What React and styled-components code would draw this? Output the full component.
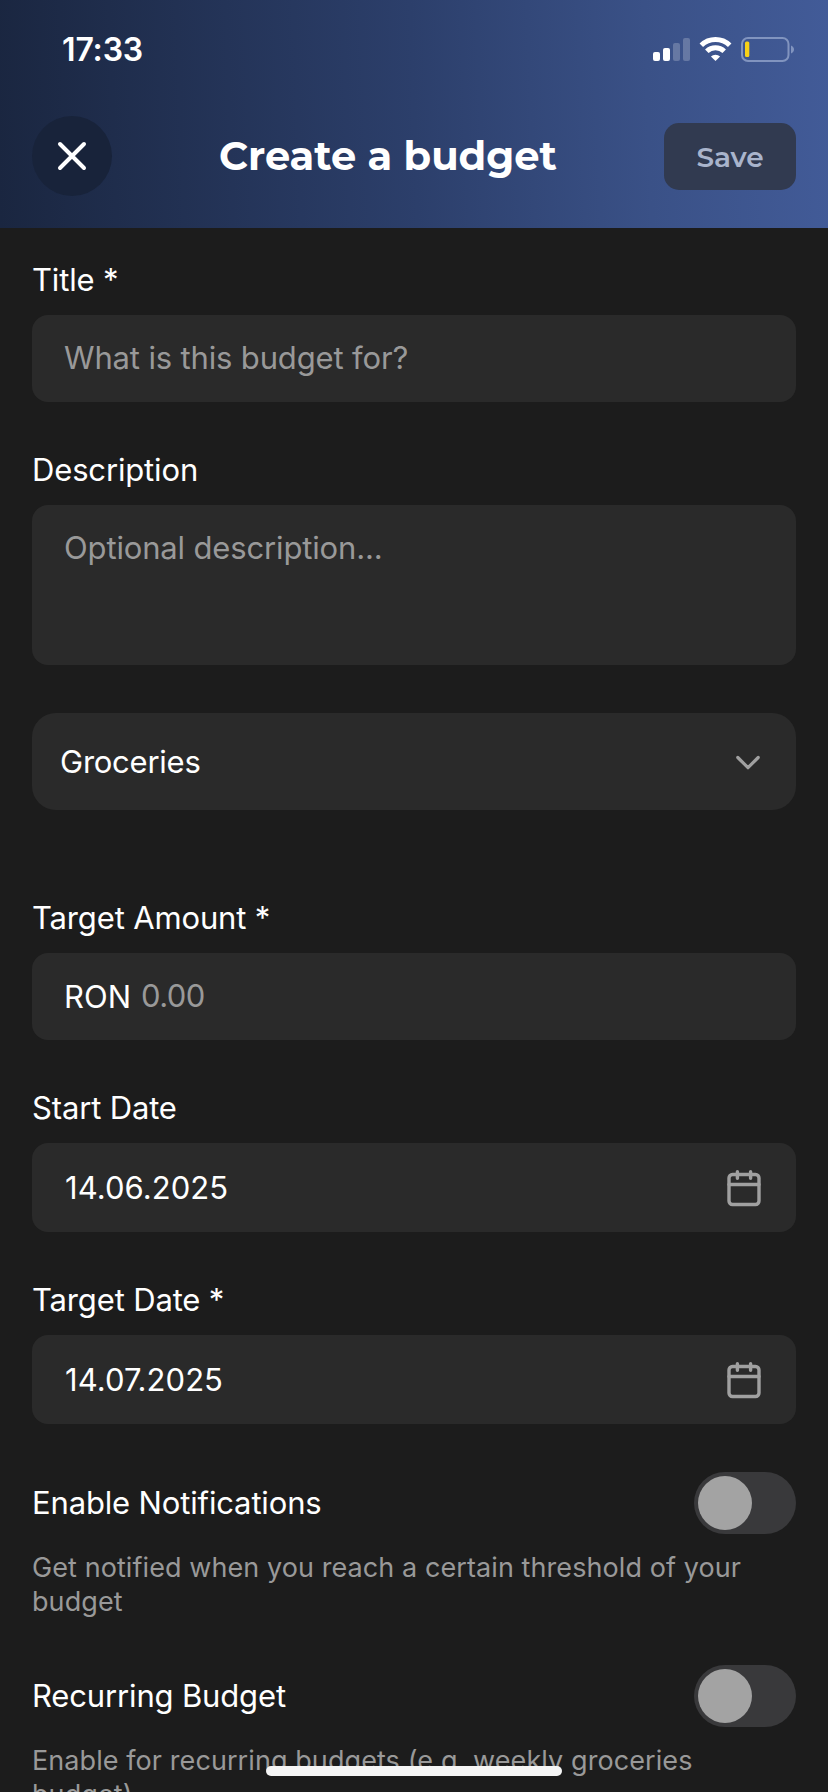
import React from "react";
import styled, { createGlobalStyle } from "styled-components";

const GlobalStyle = createGlobalStyle`
  *, *::before, *::after { box-sizing: border-box; }
  html, body { margin: 0; padding: 0; background: #1c1c1c; }
  body { overflow: hidden; }
  button, input, textarea { font: inherit; letter-spacing: inherit; border: 0; margin: 0; }
`;

const Screen = styled.main`
  position: relative;
  width: 828px;
  height: 1792px;
  overflow: hidden;
  background: #1c1c1c;
  color: #fff;
  font-family: "Inter", "Liberation Sans", sans-serif;
  font-size: 31px;
  letter-spacing: -0.15px;
`;

const Header = styled.header`
  height: 228px;
  background: linear-gradient(88deg, #1a2640 0%, #2c3f6b 50%, #3a5187 78%, #425b98 100%);
`;

const StatusBar = styled.div`
  display: flex;
  align-items: center;
  justify-content: space-between;
  height: 98px;
  padding: 0 34px 0 62px;
`;

const Clock = styled.time`
  font-size: 32px;
  font-weight: 600;
  line-height: 36px;
  padding-top: 2px;
`;

const StatusIcons = styled.svg`
  display: block;
  width: 142px;
  height: 28px;
`;

const NavBar = styled.div`
  display: flex;
  align-items: center;
  justify-content: space-between;
  height: 116px;
  padding: 0 32px;
`;

const CloseButton = styled.button`
  display: grid;
  place-items: center;
  width: 80px;
  height: 80px;
  padding: 0;
  border-radius: 50%;
  background: #18233a;
  color: #fff;
`;

const Heading = styled.h1`
  margin: 0;
  font-family: "Montserrat", "Inter", sans-serif;
  font-size: 40px;
  font-weight: 700;
  line-height: 48px;
  letter-spacing: 0;
`;

const SaveButton = styled.button`
  width: 132px;
  height: 67px;
  margin-top: 1px;
  padding: 0;
  border-radius: 15px;
  background: #313a50;
  color: #a9b4cc;
  font-family: "Montserrat", "Inter", sans-serif;
  font-size: 28px;
  font-weight: 600;
`;

const Form = styled.form`
  display: flex;
  flex-direction: column;
  gap: 48px;
  padding: 32px 32px 0;
`;

const Field = styled.div`
  display: flex;
  flex-direction: column;
  gap: 16px;
  margin-top: ${({ $extraTop }) => $extraTop || 0}px;
`;

const Label = styled.label`
  line-height: 39px;
`;

const Control = styled.div`
  display: flex;
  align-items: center;
  justify-content: space-between;
  height: ${({ $height }) => $height || 87}px;
  padding: 0 32px;
  border-radius: 16px;
  background: #2a2a2a;
`;

const TextInput = styled.input`
  flex: 1;
  min-width: 0;
  padding: 0 0 2px;
  outline: 0;
  background: transparent;
  color: #fff;
  &::placeholder { color: #999; opacity: 1; }
`;

const TextArea = styled.textarea`
  display: block;
  width: 100%;
  height: 160px;
  padding: 24px 32px;
  resize: none;
  outline: 0;
  border-radius: 16px;
  background: #2a2a2a;
  color: #fff;
  line-height: 38px;
  &::placeholder { color: #999; opacity: 1; }
`;

const Currency = styled.span`
  margin-right: 10px;
  letter-spacing: 0;
`;

const AmountInput = styled(TextInput)`
  letter-spacing: -0.6px;
`;

const DateValue = styled.span`
  padding-left: 1px;
  letter-spacing: 0.05px;
`;

const Select = styled.div`
  display: flex;
  align-items: center;
  justify-content: space-between;
  height: 97px;
  padding: 0 34px 0 28px;
  border-radius: 24px;
  background: #2a2a2a;
  letter-spacing: -0.25px;
`;

const ToggleGroup = styled.section`
  display: flex;
  flex-direction: column;
  gap: 17px;
  margin-bottom: -2px;
`;

const ToggleRow = styled.div`
  display: flex;
  align-items: center;
  justify-content: space-between;
`;

const ToggleLabel = styled.span`
  padding-bottom: 2px;
`;

const Switch = styled.button`
  display: flex;
  align-items: center;
  width: 102px;
  height: 62px;
  padding: 0 4px;
  border-radius: 31px;
  background: #39393b;
`;

const Knob = styled.span`
  width: 54px;
  height: 54px;
  border-radius: 50%;
  background: #a3a3a3;
`;

const Hint = styled.p`
  margin: 0;
  color: #999;
  font-size: 27px;
  line-height: 34px;
  letter-spacing: 0.08px;
`;

const HomeIndicator = styled.div`
  position: absolute;
  left: 266px;
  bottom: 16px;
  width: 296px;
  height: 10px;
  border-radius: 5px;
  background: #f5f5f5;
`;

const CalendarIcon = () => (
  <svg width="40" height="40" viewBox="0 0 40 40" fill="none" stroke="#a0a0a0" strokeWidth="3.4" strokeLinecap="round" strokeLinejoin="round">
    <rect x="5" y="6.5" width="30" height="30" rx="3.5" />
    <path d="M5 16.5h30M13.4 3.7v6.6M26.6 3.7v6.6" />
  </svg>
);

const DateField = ({ label, value }) => (
  <Field>
    <Label>{label}</Label>
    <Control $height={89}>
      <DateValue>{value}</DateValue>
      <CalendarIcon />
    </Control>
  </Field>
);

const Toggle = ({ label, hint }) => (
  <ToggleGroup>
    <ToggleRow>
      <ToggleLabel>{label}</ToggleLabel>
      <Switch type="button" role="switch" aria-checked="false" aria-label={label}>
        <Knob />
      </Switch>
    </ToggleRow>
    <Hint>{hint}</Hint>
  </ToggleGroup>
);

export default function App() {
  return (
    <Screen>
      <GlobalStyle />
      <Header>
        <StatusBar>
          <Clock>17:33</Clock>
          <StatusIcons viewBox="652 35 142 28" fill="none">
            <g fill="#fff">
              <rect x="653" y="52" width="7" height="9" rx="2" />
              <rect x="663" y="48" width="7" height="13" rx="2" />
              <rect x="673" y="43" width="7" height="18" rx="2" opacity=".22" />
              <rect x="683" y="38" width="7" height="23" rx="2" opacity=".22" />
            </g>
            <g stroke="#fff" strokeWidth="5">
              <path d="M701.3 45.3a20.4 20.4 0 0 1 28.4 0" />
              <path d="M706.8 51.3a12.6 12.6 0 0 1 17.4 0" />
            </g>
            <path d="M715.5 61l-4.6-4.5a6.7 6.7 0 0 1 9.2 0z" fill="#fff" />
            <rect x="742" y="38" width="46.5" height="23" rx="6" stroke="#8194bf" strokeWidth="2" />
            <path d="M791 45.5c4 1.6 4 6.4 0 8z" fill="#8194bf" />
            <rect x="745" y="41.5" width="4.3" height="15.5" rx="1.5" fill="#f7d117" />
          </StatusIcons>
        </StatusBar>
        <NavBar>
          <CloseButton type="button" aria-label="Close">
            <svg width="32" height="32" viewBox="0 0 32 32" stroke="#fff" strokeWidth="4" strokeLinecap="round">
              <path d="M4 4l24 24M28 4L4 28" />
            </svg>
          </CloseButton>
          <Heading>Create a budget</Heading>
          <SaveButton type="button">Save</SaveButton>
        </NavBar>
      </Header>
      <Form>
        <Field>
          <Label>Title *</Label>
          <Control>
            <TextInput placeholder="What is this budget for?" />
          </Control>
        </Field>
        <Field>
          <Label>Description</Label>
          <TextArea placeholder="Optional description..." />
        </Field>
        <Select>
          <span>Groceries</span>
          <svg width="28" height="28" viewBox="0 0 28 28" fill="none" stroke="#a0a0a0" strokeWidth="3.2" strokeLinecap="round" strokeLinejoin="round">
            <path d="M3.8 9.5L14 19.7L24.2 9.5" />
          </svg>
        </Select>
        <Field $extraTop={40}>
          <Label>Target Amount *</Label>
          <Control>
            <Currency>RON</Currency>
            <AmountInput placeholder="0.00" />
          </Control>
        </Field>
        <DateField label="Start Date" value="14.06.2025" />
        <DateField label="Target Date *" value="14.07.2025" />
        <Toggle label="Enable Notifications" hint="Get notified when you reach a certain threshold of your budget" />
        <Toggle label="Recurring Budget" hint="Enable for recurring budgets (e.g. weekly groceries budget)" />
      </Form>
      <HomeIndicator />
    </Screen>
  );
}
